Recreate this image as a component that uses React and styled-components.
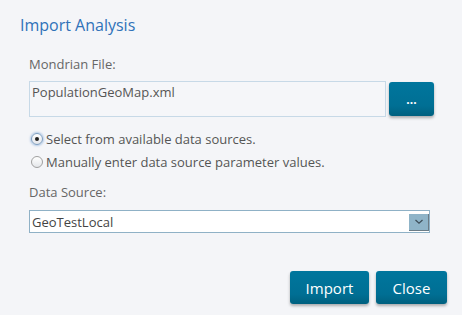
import styled, { createGlobalStyle } from 'styled-components';

const GlobalStyle = createGlobalStyle`
    html, body {
        margin: 0;
        padding: 0;
        background: #f4f5f8;
    }
    body {
        font-family: "Open Sans", "Liberation Sans", sans-serif;
    }
`;

const Dialog = styled.div`
    width: 462px;
    height: 315px;
    box-sizing: border-box;
    padding: 14px 15px 0 20px;
    display: flex;
    flex-direction: column;
`;

const Title = styled.h1`
    margin: 0;
    font-size: 16px;
    font-weight: 400;
    line-height: 23px;
    color: #2f72b9;
`;

const Body = styled.div`
    padding: 0 13px 0 9px;
    display: flex;
    flex-direction: column;
`;

const Label = styled.div`
    font-size: 13px;
    line-height: 18px;
    color: #666;
    margin-top: ${(p) => p.top}px;
`;

const FileRow = styled.div`
    display: flex;
    align-items: flex-start;
    gap: 3px;
    margin-top: 8px;
`;

const FileField = styled.div`
    flex: 1;
    height: 36px;
    box-sizing: border-box;
    border: 1px solid #c7d9e7;
    background: #f5f6f9;
    padding: 1px 2px;
    font-size: 13px;
    line-height: 18px;
    color: #555;
`;

const Button = styled.button`
    border: none;
    border-radius: 3px;
    background: linear-gradient(#00769d, #006f94 70%, #00607f);
    box-shadow: 0 2px 3px rgba(0, 0, 0, 0.3);
    color: #fff;
    font-family: "Open Sans", "Liberation Sans", sans-serif;
    font-size: ${(p) => (p.small ? 12 : 15)}px;
    font-weight: ${(p) => (p.small ? 700 : 400)};
    width: ${(p) => p.w}px;
    height: ${(p) => p.h}px;
    margin-top: ${(p) => p.top || 0}px;
    padding: 0;
    cursor: pointer;
`;

const RadioGroup = styled.div`
    display: flex;
    flex-direction: column;
    gap: 5px;
    margin-top: 13px;
`;

const RadioRow = styled.label`
    display: flex;
    align-items: center;
    gap: 3px;
    font-size: 13px;
    line-height: 18px;
    color: #555;
    margin-left: 2px;
`;

const Radio = styled.span`
    width: 12px;
    height: 12px;
    box-sizing: border-box;
    border-radius: 50%;
    border: 1px solid ${(p) => (p.checked ? '#7d9ec0' : '#a0a0a0')};
    background: linear-gradient(#ffffff, #e4e6ea);
    box-shadow: ${(p) => (p.checked ? '0 0 2px 1px rgba(100, 150, 210, 0.45)' : 'none')};
    display: flex;
    align-items: center;
    justify-content: center;
    &::after {
        content: '';
        width: 4px;
        height: 4px;
        border-radius: 50%;
        background: #222;
        display: ${(p) => (p.checked ? 'block' : 'none')};
    }
`;

const SelectBox = styled.div`
    margin-top: 9px;
    margin-right: 4px;
    height: 23px;
    box-sizing: border-box;
    border: 1px solid #8fb1c6;
    background: #fff;
    display: flex;
    align-items: center;
    justify-content: space-between;
    padding: 0 0 0 2px;
    font-size: 13px;
    color: #444;
`;

const ArrowBox = styled.span`
    width: 20px;
    height: 17px;
    margin-top: 1px;
    box-sizing: border-box;
    background: #8fb4c8;
    border-right: 1px solid #6c7c86;
    border-bottom: 1px solid #6c7c86;
    display: flex;
    align-items: center;
    justify-content: center;
`;

const Footer = styled.div`
    display: flex;
    justify-content: flex-end;
    gap: 7px;
    margin-top: 38px;
`;

const App = () => {
    return (
        <>
            <GlobalStyle />
            <Dialog>
                <Title>Import Analysis</Title>
                <Body>
                    <Label top={18}>Mondrian File:</Label>
                    <FileRow>
                        <FileField>PopulationGeoMap.xml</FileField>
                        <Button small w={45} h={34} top={1}>...</Button>
                    </FileRow>
                    <RadioGroup>
                        <RadioRow>
                            <Radio checked />
                            Select from available data sources.
                        </RadioRow>
                        <RadioRow>
                            <Radio />
                            Manually enter data source parameter values.
                        </RadioRow>
                    </RadioGroup>
                    <Label top={12}>Data Source:</Label>
                    <SelectBox>
                        GeoTestLocal
                        <ArrowBox>
                            <svg width="10" height="6" viewBox="0 0 10 6">
                                <path d="M1.5 1 L5 4.3 L8.5 1" fill="none" stroke="#3d4d58" strokeWidth="1.2" />
                            </svg>
                        </ArrowBox>
                    </SelectBox>
                </Body>
                <Footer>
                    <Button w={79} h={33}>Import</Button>
                    <Button w={71} h={33}>Close</Button>
                </Footer>
            </Dialog>
        </>
    );
};

export default App;
